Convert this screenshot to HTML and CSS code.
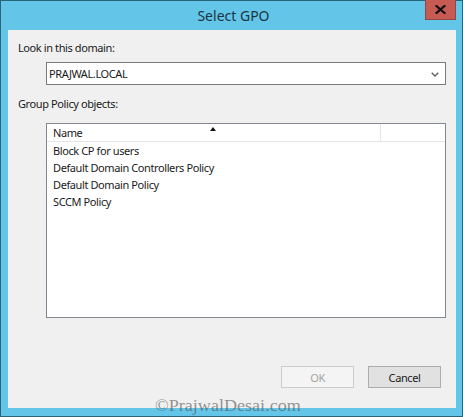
FILE: index.html
```html
<!DOCTYPE html>
<html>
<head>
<meta charset="utf-8">
<link rel="stylesheet" href="styles.css">
</head>
<body>
<div class="window">
  <div class="titlebar">
    <div></div>
    <div class="title">Select GPO</div>
    <div class="close"><svg width="11" height="9" viewBox="0 0 11 9"><path d="M1.5 1 L9.5 8 M9.5 1 L1.5 8" stroke="#111" stroke-width="2.2" stroke-linecap="square"/></svg></div>
  </div>
  <div class="client">
    <div class="label">Look in this domain:</div>
    <div class="combo">
      <span>PRAJWAL.LOCAL</span>
      <svg class="chev" width="8" height="5" viewBox="0 0 8 5"><path d="M0.7 0.7 L4 4 L7.3 0.7" fill="none" stroke="#606060" stroke-width="1.4"/></svg>
    </div>
    <div class="label label2">Group Policy objects:</div>
    <div class="list">
      <div class="header">
        <div class="col-name">Name<span class="sort"></span></div>
        <div class="col-rest"></div>
      </div>
      <div class="row">Block CP for users</div>
      <div class="row">Default Domain Controllers Policy</div>
      <div class="row">Default Domain Policy</div>
      <div class="row">SCCM Policy</div>
    </div>
    <div class="buttons">
      <div class="btn disabled">OK</div>
      <div class="btn">Cancel</div>
    </div>
  </div>
  <div class="watermark">©PrajwalDesai.com</div>
</div>
</body>
</html>
```
FILE: styles.css
```css
html, body {
  margin: 0;
  padding: 0;
  background: #63c6e9;
}
.window {
  position: relative;
  width: 463px;
  height: 417px;
  box-sizing: border-box;
  border: 1px solid #2a6479;
  background: #63c6e9;
  display: flex;
  flex-direction: column;
  font-family: "Noto Sans", "Open Sans", sans-serif;
  color: #1a1a1a;
}
.titlebar {
  height: 29px;
  display: grid;
  grid-template-columns: 1fr auto 1fr;
  align-items: start;
}
.title {
  font-size: 14px;
  line-height: 29px;
  color: #1c3442;
  padding-left: 4px;
}
.close {
  justify-self: end;
  margin-right: 6px;
  margin-top: -1px;
  width: 31px;
  height: 20px;
  box-sizing: border-box;
  background: #c75a52;
  border: 1px solid #8e4a46;
  border-top: none;
  display: flex;
  align-items: center;
  justify-content: center;
}
.client {
  margin: 0 6px 7px 7px;
  height: 378px;
  background: #f0f0f0;
  display: flex;
  flex-direction: column;
  padding: 10px 0 0 10px;
  box-sizing: border-box;
  font-size: 11px;
  letter-spacing: -0.4px;
}
.label {
  line-height: 15px;
  height: 15px;
}
.combo {
  margin: 7px 0 0 28px;
  width: 400px;
  height: 23px;
  box-sizing: border-box;
  border: 1px solid #7a7a7a;
  background: #fff;
  display: flex;
  align-items: center;
  justify-content: space-between;
  padding: 0 6px 0 2px;
}
.chev {
  margin-top: 1px;
}
.label2 {
  margin-top: 11px;
}
.list {
  margin: 12px 0 0 28px;
  width: 400px;
  height: 195px;
  box-sizing: border-box;
  border: 1px solid #828790;
  background: #fff;
}
.header {
  display: flex;
  height: 18px;
  border-bottom: 1px solid #e5e5e5;
  box-sizing: border-box;
}
.col-name {
  position: relative;
  width: 334px;
  border-right: 1px solid #e5e5e5;
  padding-left: 6px;
  line-height: 18px;
  box-sizing: border-box;
}
.sort {
  position: absolute;
  left: 163px;
  top: 3px;
  width: 0;
  height: 0;
  border-left: 3px solid transparent;
  border-right: 3px solid transparent;
  border-bottom: 4px solid #111;
}
.col-rest {
  flex: 1;
}
.row {
  height: 17px;
  line-height: 17px;
  padding-left: 6px;
}
.buttons {
  display: flex;
  justify-content: flex-end;
  gap: 14px;
  margin: 48px 15px 0 0;
}
.btn {
  width: 73px;
  height: 22px;
  box-sizing: border-box;
  border: 1px solid #adadad;
  background: #e1e1e1;
  display: flex;
  align-items: center;
  justify-content: center;
}
.btn.disabled {
  border-color: #cccccc;
  background: #f4f4f4;
  color: #a3a3a3;
}
.watermark {
  position: absolute;
  left: 154px;
  top: 396px;
  font-family: "Liberation Serif", serif;
  font-size: 16px;
  line-height: 17px;
  color: rgba(80, 80, 80, 0.6);
  transform: scaleX(1.13);
  transform-origin: left center;
}
```
